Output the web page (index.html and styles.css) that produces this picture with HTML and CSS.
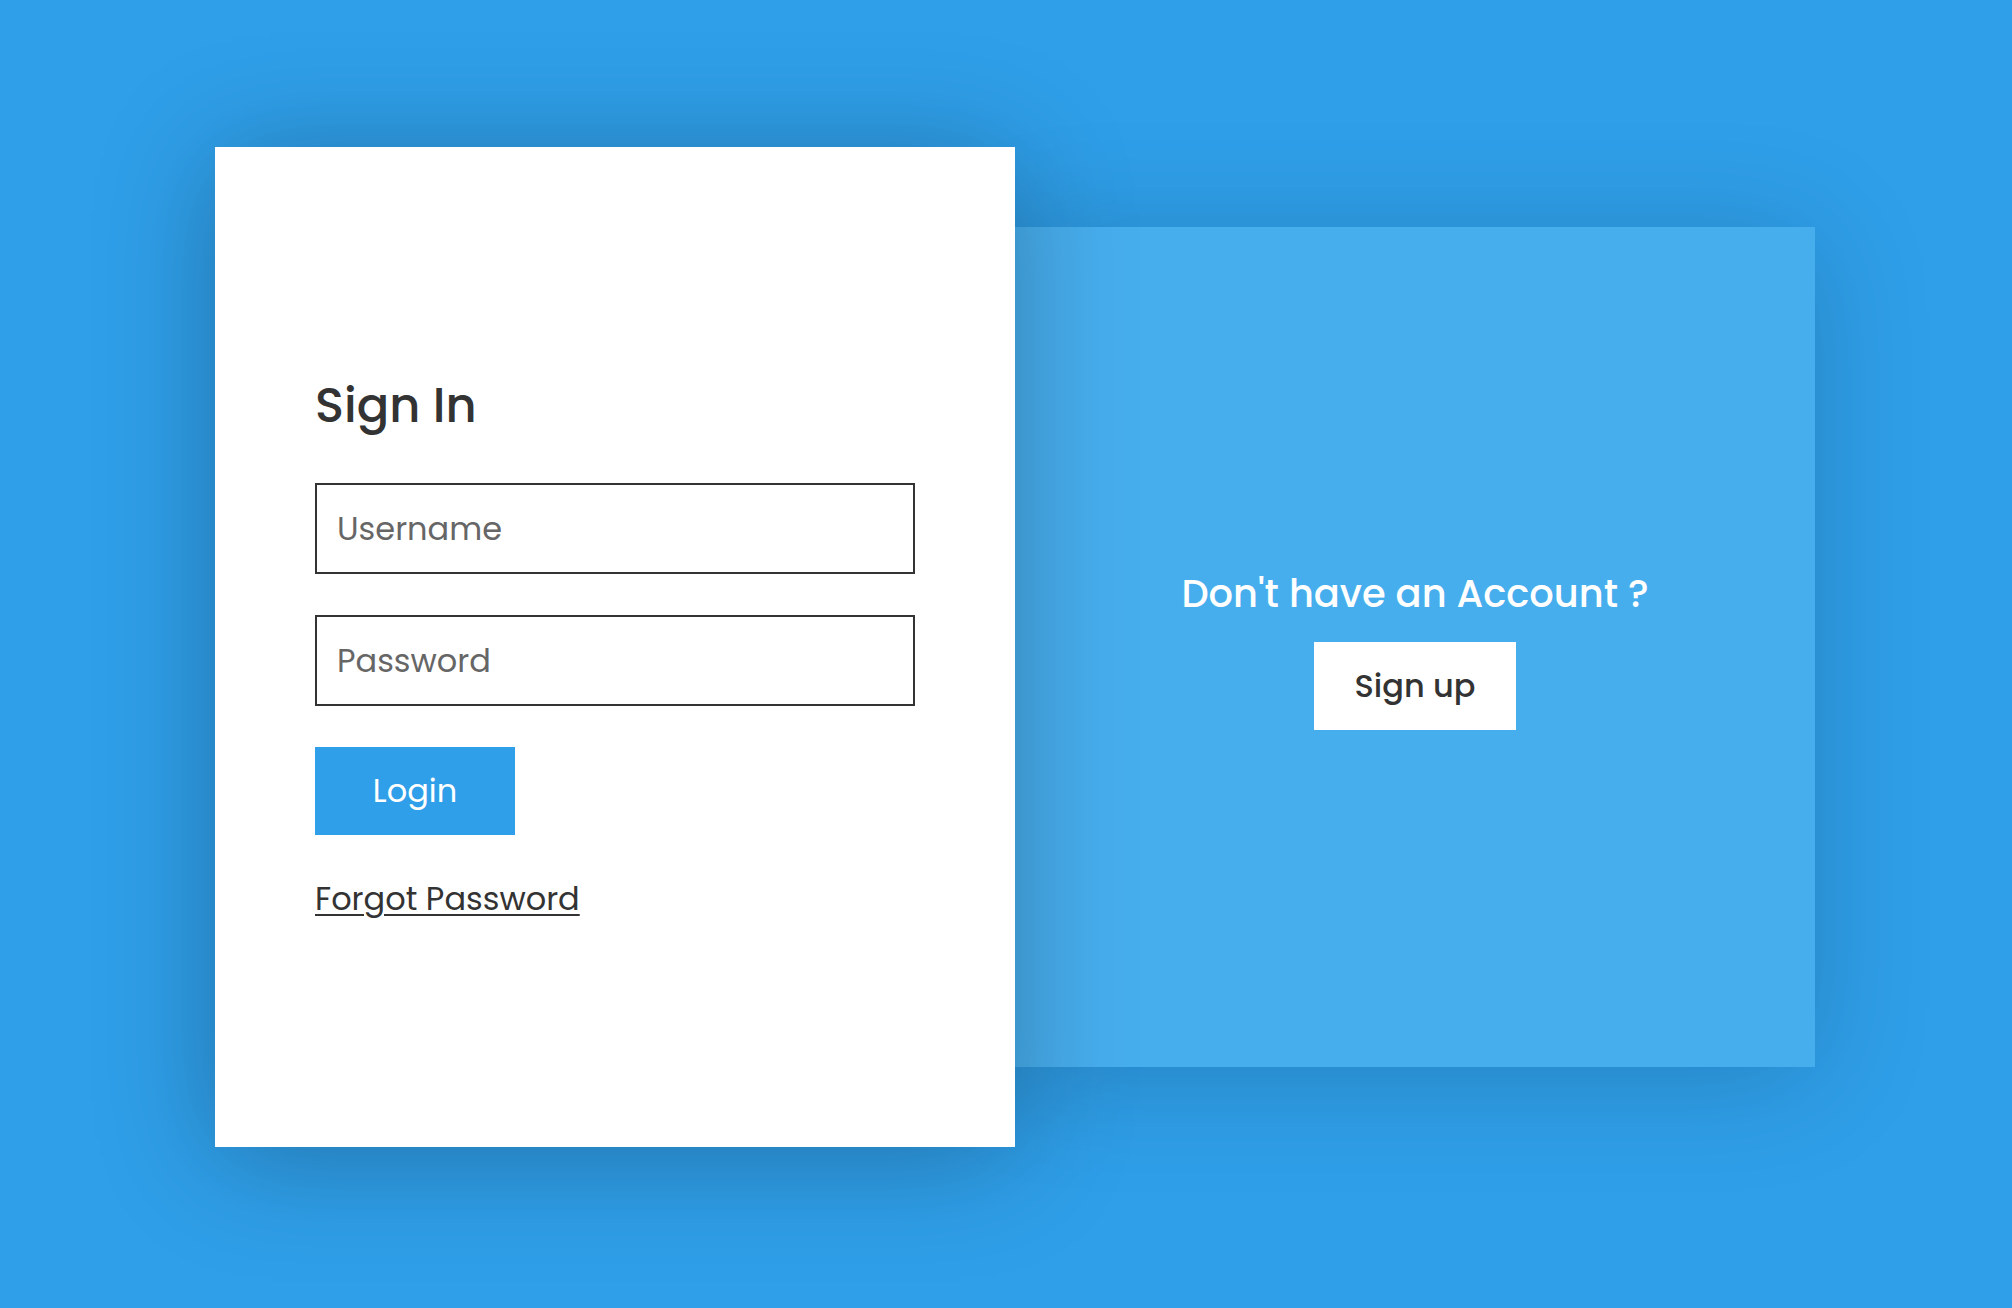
FILE: index.html
```html
<!DOCTYPE html>
<html lang="en">
<head>
<meta charset="utf-8">
<title>Sign In</title>
<link rel="stylesheet" href="styles.css">
</head>
<body>
<div class="page">
  <form class="card">
    <h2 class="card-title">Sign In</h2>
    <input class="field" type="text" placeholder="Username">
    <input class="field" type="password" placeholder="Password">
    <button class="btn-login" type="button">Login</button>
    <a class="forgot" href="#">Forgot Password</a>
  </form>
  <div class="panel">
    <h3 class="panel-title">Don't have an Account ?</h3>
    <button class="btn-signup" type="button">Sign up</button>
  </div>
</div>
</body>
</html>
```
FILE: styles.css
```css
html, body {
  margin: 0;
  padding: 0;
}
body {
  background: #2f9fe9;
  font-family: "Poppins", "DejaVu Sans", sans-serif;
  width: 2012px;
  height: 1308px;
  overflow: hidden;
}
.page {
  display: flex;
  align-items: center;
  padding: 147px 0 0 215px;
}
.card {
  position: relative;
  z-index: 2;
  box-sizing: border-box;
  width: 800px;
  height: 1000px;
  padding: 2px 100px 0;
  background: #fff;
  display: flex;
  flex-direction: column;
  justify-content: center;
  align-items: flex-start;
  box-shadow: 0 10px 110px rgba(0, 0, 0, 0.28);
}
.card-title {
  margin: 0 0 48px;
  font-size: 48px;
  line-height: 58px;
  font-weight: 500;
  color: #333;
}
.field {
  box-sizing: border-box;
  width: 600px;
  height: 91px;
  margin: 0 0 41px;
  padding: 0 20px;
  border: 2px solid #333;
  border-radius: 0;
  outline: none;
  font-family: inherit;
  font-size: 32px;
  color: #333;
  background: #fff;
}
.field::placeholder {
  color: #666;
}
.btn-login {
  box-sizing: border-box;
  width: 200px;
  height: 88px;
  margin: 0 0 44px;
  padding: 0;
  border: none;
  background: #2f9fe9;
  color: #fff;
  font-family: inherit;
  font-size: 32px;
  cursor: pointer;
}
.forgot {
  font-size: 32px;
  line-height: 40px;
  color: #333;
  text-decoration: underline;
  text-decoration-thickness: 2px;
  text-underline-offset: 4px;
}
.panel {
  position: relative;
  z-index: 1;
  box-sizing: border-box;
  width: 800px;
  height: 840px;
  background: #47aeee;
  display: flex;
  flex-direction: column;
  justify-content: center;
  align-items: center;
  box-shadow: 0 10px 110px rgba(0, 0, 0, 0.18);
}
.panel-title {
  margin: 0 0 20px;
  font-size: 38.4px;
  line-height: normal;
  font-weight: 500;
  color: #fff;
}
.btn-signup {
  box-sizing: border-box;
  height: 88px;
  padding: 0 40px;
  border: none;
  background: #fff;
  color: #333;
  font-family: inherit;
  font-size: 32px;
  font-weight: 500;
  cursor: pointer;
}
```
